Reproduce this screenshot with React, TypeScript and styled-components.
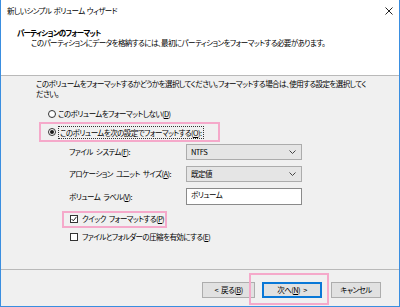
import React from "react";
import styled, { createGlobalStyle } from "styled-components";

const GlobalStyle = createGlobalStyle`
  html, body {
    margin: 0;
    padding: 0;
    background: #ffffff;
  }
  body {
    font-family: "Noto Sans CJK JP", "Noto Sans", sans-serif;
    font-feature-settings: "palt";
  }
`;

const Window = styled.div`
  width: 400px;
  height: 307px;
  box-sizing: border-box;
  border: 1px solid #3a8ee0;
  border-top: none;
  background: #f0f0f0;
  display: flex;
  flex-direction: column;
  font-size: 7.5px;
  letter-spacing: -0.55px;
  word-spacing: 2px;
  line-height: 10px;
  color: #000;
  overflow: hidden;
`;

const TitleBar = styled.div`
  height: 22px;
  background: #fff;
  display: flex;
  align-items: center;
  justify-content: space-between;
  padding: 0 6px 0 6px;
  word-spacing: 1px;
`;

const Header = styled.div`
  height: 54px;
  box-sizing: border-box;
  background: #fff;
  border-bottom: 1px solid #b9b9b9;
  padding: 6px 0 0 16px;
  display: flex;
  flex-direction: column;
`;

const HeaderTitle = styled.div`
  font-weight: bold;
  height: 10px;
  letter-spacing: -0.75px;
`;

const HeaderSub = styled.div`
  margin: 0 0 0 14px;
  height: 10px;
`;

const Body = styled.div`
  flex: 1;
  padding: 3px 0 0 35px;
  display: flex;
  flex-direction: column;
  align-items: flex-start;
`;

const Paragraph = styled.div`
  white-space: nowrap;
`;

const Highlight = styled.div<{ $inset: string; $m?: string }>`
  position: relative;
  margin: ${(p) => p.$m || "0"};
  &::after {
    content: "";
    position: absolute;
    inset: ${(p) => p.$inset};
    border: 2px solid #f5a9ca;
    pointer-events: none;
  }
`;

const OptionRow = styled.div<{ $h?: number; $m?: string }>`
  display: flex;
  align-items: center;
  gap: 2px;
  height: ${(p) => p.$h || 14}px;
  margin: ${(p) => p.$m || "0"};
  white-space: nowrap;
`;

const RadioDot = styled.span<{ $on?: boolean }>`
  width: 8px;
  height: 8px;
  box-sizing: border-box;
  border-radius: 50%;
  border: 1px solid #333;
  background: #fff;
  display: inline-flex;
  align-items: center;
  justify-content: center;
  &::after {
    content: "";
    width: 4px;
    height: 4px;
    border-radius: 50%;
    background: ${(p) => (p.$on ? "#1a1a1a" : "transparent")};
  }
`;

const Focus = styled.span`
  border: 1px dotted #333;
  padding: 0 1px;
  line-height: 11px;
`;

const U = styled.span`
  text-decoration: underline;
`;

const Form = styled.div`
  margin: 5px 0 0 33px;
  display: grid;
  grid-template-columns: 117px 116px;
  grid-template-rows: 16px 16px 17px;
  row-gap: 6px;
  align-items: center;
`;

const Label = styled.div`
  white-space: nowrap;
`;

const Select = styled.div`
  height: 16px;
  box-sizing: border-box;
  background: #e5e5e5;
  border: 1px solid #acacac;
  display: flex;
  align-items: center;
  justify-content: space-between;
  padding: 0 5px 0 4px;
`;

const TextBox = styled.div`
  height: 17px;
  box-sizing: border-box;
  background: #fff;
  border: 1px solid #8a8a8a;
  padding: 1px 0 0 4px;
`;

const CheckBox = styled.span`
  width: 8px;
  height: 8px;
  box-sizing: border-box;
  border: 1px solid #333;
  background: #fff;
  display: inline-flex;
  align-items: center;
  justify-content: center;
  margin-right: 2px;
`;

const Footer = styled.div`
  height: 37px;
  box-sizing: border-box;
  border-top: 1px solid #b9b9b9;
  display: flex;
  justify-content: flex-end;
  align-items: flex-start;
  padding: 12px 18px 0 0;
`;

const Button = styled.div<{ $w: number; $gap: number; $primary?: boolean }>`
  width: ${(p) => p.$w}px;
  height: 16px;
  box-sizing: border-box;
  margin-left: ${(p) => p.$gap}px;
  background: #e1e1e1;
  border: ${(p) => (p.$primary ? "2px solid #0a78d7" : "1px solid #adadad")};
  display: flex;
  align-items: center;
  justify-content: center;
  white-space: nowrap;
`;

const Chevron = () => (
  <svg width="7" height="4" viewBox="0 0 7 4">
    <path d="M0.5 0.5 L3.5 3.5 L6.5 0.5" fill="none" stroke="#444" strokeWidth="1" />
  </svg>
);

const CloseIcon = () => (
  <svg width="8" height="8" viewBox="0 0 8 8">
    <path d="M0.5 0.5 L7.5 7.5 M7.5 0.5 L0.5 7.5" stroke="#222" strokeWidth="1" />
  </svg>
);

const Check = () => (
  <svg width="6" height="6" viewBox="0 0 6 6">
    <path d="M0.6 3 L2.3 4.8 L5.5 0.8" fill="none" stroke="#222" strokeWidth="1" />
  </svg>
);

export default function App() {
  return (
    <>
      <GlobalStyle />
      <Window>
        <TitleBar>
          <span>新しいシンプル ボリューム ウィザード</span>
          <CloseIcon />
        </TitleBar>
        <Header>
          <HeaderTitle>パーティションのフォーマット</HeaderTitle>
          <HeaderSub>このパーティションにデータを格納するには、最初にパーティションをフォーマットする必要があります。</HeaderSub>
        </Header>
        <Body>
          <Paragraph>
            このボリュームをフォーマットするかどうかを選択してください。フォーマットする場合は、使用する設定を選択してく
            <br />
            ださい。
          </Paragraph>
          <OptionRow $m="8px 0 0 12px">
            <RadioDot />
            <span>
              このボリュームをフォーマットしない(<U>D</U>)
            </span>
          </OptionRow>
          <Highlight $m="4px 0 0 12px" $inset="-3px -16px -3px -9px">
            <OptionRow>
              <RadioDot $on />
              <Focus>
                このボリュームを次の設定でフォーマットする(<U>O</U>):
              </Focus>
            </OptionRow>
          </Highlight>
          <Form>
            <Label>
              ファイル システム(<U>F</U>):
            </Label>
            <Select>
              <span>NTFS</span>
              <Chevron />
            </Select>
            <Label>
              アロケーション ユニット サイズ(<U>A</U>):
            </Label>
            <Select>
              <span>既定値</span>
              <Chevron />
            </Select>
            <Label>
              ボリューム ラベル(<U>V</U>):
            </Label>
            <TextBox>ボリューム</TextBox>
          </Form>
          <Highlight $m="8px 0 0 34px" $inset="-2px -3px -3px -8px">
            <OptionRow $h={12}>
              <CheckBox>
                <Check />
              </CheckBox>
              <span>
                クイック フォーマットする(<U>P</U>)
              </span>
            </OptionRow>
          </Highlight>
          <OptionRow $h={12} $m="6px 0 0 34px">
            <CheckBox />
            <span>
              ファイルとフォルダーの圧縮を有効にする(<U>E</U>)
            </span>
          </OptionRow>
        </Body>
        <Footer>
          <Button $w={53} $gap={0}>
            &lt; 戻る(<U>B</U>)
          </Button>
          <Highlight $inset="-9px -7px -7px -6px">
            <Button $w={60} $gap={7} $primary>
              次へ(<U>N</U>) &gt;
            </Button>
          </Highlight>
          <Button $w={50} $gap={9}>
            キャンセル
          </Button>
        </Footer>
      </Window>
    </>
  );
}
